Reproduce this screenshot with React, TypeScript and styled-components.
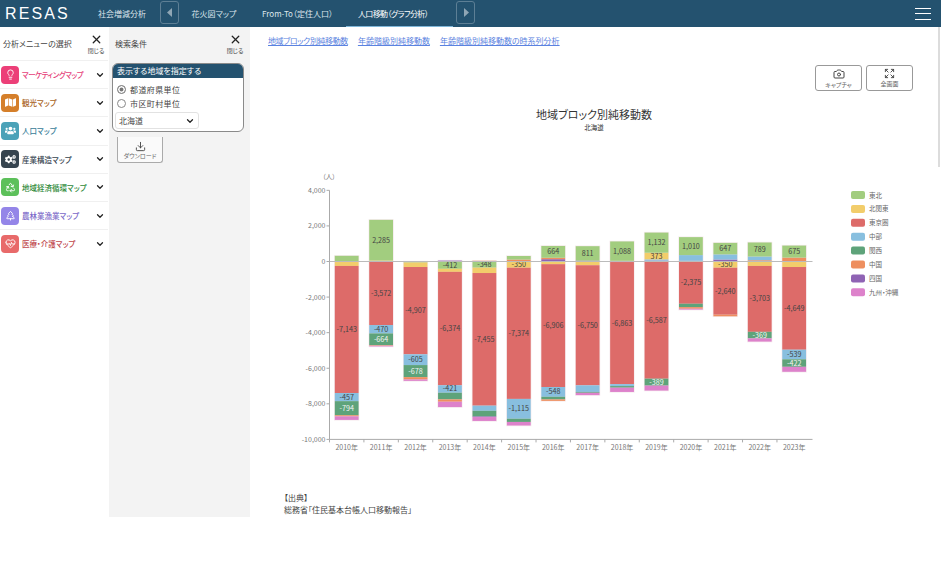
import React from "react";
import styled, { createGlobalStyle } from "styled-components";
import {
  ChevronDown,
  X,
  Lightbulb,
  Recycle,
  TreePine,
  HeartPulse,
  Camera,
  Expand,
  Download,
} from "lucide-react";
import { FaCogs, FaMap, FaUsers } from "react-icons/fa";

const GlobalStyle = createGlobalStyle`
  html, body {
    margin: 0;
    padding: 0;
    background: #fff;
    font-family: "Noto Sans CJK JP", "Noto Sans", sans-serif;
    font-feature-settings: "palt";
    color: #333;
  }
`;

const Page = styled.div`
  position: relative;
  width: 941px;
  height: 561px;
  overflow: hidden;
  display: flex;
  flex-direction: column;
`;

const ScrollThumb = styled.div`
  position: absolute;
  top: 27px;
  right: 1px;
  width: 2px;
  height: 140px;
  background: #dcdcdc;
`;

const Header = styled.header`
  height: 27px;
  flex: none;
  background: #24526f;
  display: flex;
  align-items: stretch;
  color: #fff;
`;

const Logo = styled.div`
  width: 84px;
  padding-left: 5px;
  box-sizing: border-box;
  font-family: "Liberation Sans", sans-serif;
  font-size: 16px;
  letter-spacing: 2.1px;
  line-height: 27px;
`;

const Tab = styled.div<{ $w: number; $active?: boolean }>`
  width: ${({ $w }) => $w}px;
  flex: none;
  text-align: center;
  font-size: 8px;
  line-height: 27px;
  box-sizing: border-box;
  color: ${({ $active }) => ($active ? "#fff" : "#dde6ec")};
  border-bottom: ${({ $active }) => ($active ? "1px solid #7fb6d8" : "none")};
  padding-right: ${({ $active }) => ($active ? "13px" : "0")};
  letter-spacing: ${({ $active }) => ($active ? "-0.6px" : "0")};
`;

const Arrow = styled.div<{ $gap?: number }>`
  width: 19px;
  height: 23px;
  margin: 1px 0 0 ${({ $gap }) => $gap ?? 0}px;
  flex: none;
  box-sizing: border-box;
  border: 1px solid #5d7f95;
  border-radius: 3px;
  display: flex;
  align-items: center;
  justify-content: center;
`;

const Hamburger = styled.div`
  margin-left: auto;
  margin-right: 10px;
  width: 16px;
  display: flex;
  flex-direction: column;
  justify-content: center;
  gap: 4.5px;

  span {
    height: 1px;
    background: #fff;
  }
`;

const Body = styled.div`
  display: flex;
  height: 490px;
  flex: none;
`;

const Side = styled.aside`
  width: 109px;
  flex: none;
  background: #fff;
`;

const PanelHead = styled.div`
  height: 33px;
  display: flex;
  justify-content: space-between;
  align-items: flex-start;
  font-size: 8px;
`;

const PanelTitle = styled.div`
  padding: 11px 0 0 3px;
  line-height: 12px;
  color: #444;
`;

const CloseBtn = styled.div<{ $right: number }>`
  width: 18px;
  margin-right: ${({ $right }) => $right}px;
  padding-top: 6px;
  display: flex;
  flex-direction: column;
  align-items: center;
  font-size: 6px;
  line-height: 9px;
  color: #444;
`;

const MenuItem = styled.div`
  height: 28.2px;
  box-sizing: border-box;
  margin-right: 1px;
  padding-right: 3px;
  border-top: 1px solid #f0f0f0;
  display: flex;
  align-items: center;
`;

const MenuIcon = styled.div<{ $c: string }>`
  width: 18px;
  height: 18px;
  margin-left: 1px;
  flex: none;
  border-radius: 4px;
  background: ${({ $c }) => $c};
  display: flex;
  align-items: center;
  justify-content: center;
  color: #fff;
`;

const MenuLabel = styled.div<{ $c: string; $track?: number }>`
  flex: 1;
  margin-left: 3px;
  font-size: 7.5px;
  font-weight: 500;
  white-space: nowrap;
  letter-spacing: ${({ $track }) => $track ?? 0}px;
  color: ${({ $c }) => $c};
`;

const Search = styled.section`
  width: 141px;
  flex: none;
  background: #f3f3f3;
`;

const SearchTitle = styled(PanelTitle)`
  padding-left: 6px;
`;

const Box = styled.div`
  margin: 3px 6px 0 3px;
  height: 69px;
  box-sizing: border-box;
  background: #fff;
  border: 1px solid #8a8a8a;
  border-radius: 6px;
  overflow: hidden;
`;

const BoxHead = styled.div`
  height: 15px;
  margin: -1px -1px 4px;
  padding-left: 5px;
  background: #24526f;
  color: #fff;
  font-size: 8px;
  line-height: 15px;
`;

const RadioRow = styled.div`
  height: 14px;
  padding-left: 4px;
  display: flex;
  align-items: center;
  gap: 4px;
  font-size: 8px;
  letter-spacing: 0.4px;
  color: #444;
`;

const RadioDot = styled.span<{ $on?: boolean }>`
  width: 9px;
  height: 9px;
  box-sizing: border-box;
  border: 1px solid #888;
  border-radius: 50%;
  background: ${({ $on }) => ($on ? "#777" : "#fff")};
  box-shadow: ${({ $on }) => ($on ? "inset 0 0 0 1.5px #fff" : "none")};
`;

const Select = styled.div`
  width: 84px;
  height: 17px;
  margin: 2px 0 0 2px;
  padding: 0 3px;
  box-sizing: border-box;
  border: 1px solid #e2e2e2;
  border-radius: 3px;
  display: flex;
  align-items: center;
  justify-content: space-between;
  font-size: 8px;
  color: #444;
`;

const DownloadBtn = styled.div`
  width: 46px;
  height: 26px;
  margin: 5px 0 0 8px;
  box-sizing: border-box;
  border: 1px solid #aaa;
  border-top: none;
  border-radius: 0 0 3px 3px;
  background: #fafafa;
  display: flex;
  flex-direction: column;
  align-items: center;
  justify-content: flex-end;
  padding-bottom: 2px;
  font-size: 6px;
  line-height: 8px;
  color: #666;
`;

const Main = styled.main`
  flex: 1;
  min-width: 0;
  background: #fff;
`;

const Links = styled.nav`
  height: 38px;
  padding: 8px 0 0 18px;
  box-sizing: border-box;
  display: flex;
  gap: 10px;
`;

const LinkText = styled.a<{ $tight?: boolean }>`
  font-size: 8px;
  line-height: 12px;
  color: #5a82e0;
  text-decoration: underline;
  letter-spacing: ${({ $tight }) => ($tight ? "-0.4px" : "0")};
`;

const Tools = styled.div`
  height: 27px;
  padding-right: 28px;
  display: flex;
  justify-content: flex-end;
  gap: 4px;
`;

const ToolBtn = styled.div`
  width: 47px;
  height: 26px;
  box-sizing: border-box;
  border: 1px solid #999;
  border-radius: 3px;
  display: flex;
  flex-direction: column;
  align-items: center;
  justify-content: center;
  font-size: 6px;
  line-height: 8px;
  color: #666;
  gap: 1px;
`;

const ChartWrap = styled.div`
  height: 400px;
`;

const Source = styled.div`
  padding-left: 34px;
  font-size: 8px;
  line-height: 12px;
  color: #444;
`;

type Seg = [number, number];

// series index: 0 東北 1 北関東 2 東京圏 3 中部 4 関西 5 中国 6 四国 7 九州・沖縄
const series = [
  { name: "東北", color: "#a2cd7f" },
  { name: "北関東", color: "#f2cd6b" },
  { name: "東京圏", color: "#dd6b69" },
  { name: "中部", color: "#88bfdf" },
  { name: "関西", color: "#5ea37a" },
  { name: "中国", color: "#ee8f5f" },
  { name: "四国", color: "#8f63b4" },
  { name: "九州・沖縄", color: "#dd82cb" },
];

const years: { y: number; pos: Seg[]; neg: Seg[]; labels: number[] }[] = [
  { y: 2010, pos: [[0, 320]], neg: [[1, -250], [2, -7143], [3, -457], [4, -794], [5, -60], [7, -200]], labels: [-7143, -457, -794] },
  { y: 2011, pos: [[1, 57], [0, 2285]], neg: [[2, -3572], [3, -470], [4, -664], [5, -30], [7, -40]], labels: [2285, -3572, -470, -664] },
  { y: 2012, pos: [], neg: [[0, -60], [1, -250], [2, -4907], [3, -605], [4, -678], [5, -130], [7, -80]], labels: [-4907, -605, -678] },
  { y: 2013, pos: [[6, 50]], neg: [[0, -412], [1, -170], [2, -6374], [3, -421], [4, -375], [5, -130], [7, -300]], labels: [-412, -6374, -421] },
  { y: 2014, pos: [[5, 40]], neg: [[0, -348], [1, -300], [2, -7455], [3, -290], [4, -320], [6, -30], [7, -220]], labels: [-348, -7455] },
  { y: 2015, pos: [[5, 110], [0, 200]], neg: [[1, -350], [2, -7374], [3, -1115], [4, -180], [7, -200]], labels: [-350, -7374, -1115] },
  { y: 2016, pos: [[6, 130], [5, 80], [0, 664]], neg: [[1, -150], [2, -6906], [3, -548], [4, -150], [5, -80]], labels: [664, -6906, -548] },
  { y: 2017, pos: [[6, 50], [0, 811]], neg: [[1, -210], [2, -6750], [3, -370], [4, -50], [7, -130]], labels: [811, -6750] },
  { y: 2018, pos: [[5, 40], [0, 1088]], neg: [[1, -30], [2, -6863], [3, -110], [4, -90], [7, -240]], labels: [1088, -6863] },
  { y: 2019, pos: [[6, 50], [3, 70], [1, 373], [0, 1132]], neg: [[2, -6587], [4, -389], [7, -280]], labels: [1132, 373, -6587, -389] },
  { y: 2020, pos: [[6, 40], [3, 320], [0, 1010]], neg: [[2, -2375], [4, -190], [5, -90], [7, -50]], labels: [1010, -2375] },
  { y: 2021, pos: [[6, 110], [3, 290], [0, 647]], neg: [[1, -350], [2, -2640], [5, -90]], labels: [647, -350, -2640] },
  { y: 2022, pos: [[5, 70], [3, 210], [0, 789]], neg: [[1, -250], [2, -3703], [4, -369], [7, -180]], labels: [789, -3703, -369] },
  { y: 2023, pos: [[5, 220], [0, 675]], neg: [[1, -310], [2, -4649], [3, -539], [4, -422], [7, -280]], labels: [675, -4649, -539, -422] },
];

// chart svg is placed with its origin at page (250, 92)
const OX = 250;
const OY = 92;
const yOf = (v: number) => 261.5 - OY - v * 0.01779;
const xOf = (i: number) => 346.7 - OX + i * 34.42;
const fmt = (n: number) => n.toLocaleString("en-US");

function Chart() {
  const ticks = [4000, 2000, 0, -2000, -4000, -6000, -8000, -10000];
  const axisX = 329.5 - OX;
  const right = 812.5 - OX;
  const bottom = yOf(-10000);
  return (
    <svg width="691" height="373" fontFamily='"Noto Sans CJK JP", sans-serif'>
      <text x={594 - OX} y={119 - OY} fontSize="11" fill="#333" textAnchor="middle">地域ブロック別純移動数</text>
      <text x={594 - OX} y={130 - OY} fontSize="6.5" fill="#333" textAnchor="middle">北海道</text>
      <text x={329 - OX} y={179 - OY} fontSize="6.5" fill="#777" textAnchor="middle">（人）</text>

      {years.map((d, i) => {
        const x = xOf(i) - 11.9;
        let up = 0;
        let down = 0;
        const rects: React.ReactElement[] = [];
        const texts: React.ReactElement[] = [];
        const draw = ([s, v]: Seg, from: number) => {
          const to = from + v;
          const y1 = yOf(Math.max(from, to));
          const h = Math.abs(v) * 0.01779;
          rects.push(<rect key={`${s}${v}`} x={x} y={y1} width={23.8} height={h} fill={series[s].color} />);
          if (d.labels.includes(v)) {
            texts.push(
              <text key={`t${s}${v}`} x={xOf(i)} y={y1 + h / 2 + 2.5} fontSize="7.2" textAnchor="middle" fill={s === 4 ? "#f4f4f4" : "#444"}>
                {fmt(v)}
              </text>
            );
          }
          return to;
        };
        d.pos.forEach((seg) => { up = draw(seg, up); });
        d.neg.forEach((seg) => { down = draw(seg, down); });
        return (
          <g key={d.y}>
            <rect x={x - 0.7} y={yOf(up) - 0.7} width={25.2} height={yOf(down) - yOf(up) + 1.4} fill="#f4e6ea" opacity="0.8" />
            {rects}
            {texts}
          </g>
        );
      })}

      <line x1={axisX} x2={axisX} y1={yOf(4000)} y2={bottom} stroke="#aaa" />
      <line x1={axisX} x2={right} y1={bottom} y2={bottom} stroke="#aaa" />
      <line x1={axisX} x2={right} y1={yOf(0)} y2={yOf(0)} stroke="#bbb" />
      {ticks.map((t) => (
        <g key={t}>
          <line x1={axisX - 3} x2={axisX} y1={yOf(t)} y2={yOf(t)} stroke="#aaa" />
          <text x={axisX - 4} y={yOf(t) + 2.5} fontSize="7" fill="#777" textAnchor="end">{fmt(t)}</text>
        </g>
      ))}
      {years.map((d, i) => (
        <g key={d.y}>
          <line x1={xOf(i) - 17.2} x2={xOf(i) - 17.2} y1={bottom} y2={bottom + 3} stroke="#aaa" />
          <text x={xOf(i)} y={bottom + 11} fontSize="7" fill="#777" textAnchor="middle">{d.y}年</text>
        </g>
      ))}
      {series.map((s, i) => (
        <g key={s.name}>
          <rect x={851 - OX} y={191 + i * 13.9 - OY} width={14} height={8} rx="2" fill={s.color} />
          <text x={869 - OX} y={197.5 + i * 13.9 - OY} fontSize="6.5" fill="#666">{s.name}</text>
        </g>
      ))}
    </svg>
  );
}

const menus = [
  { label: "マーケティングマップ", c: "#e63f7a", bg: "#ec3f78", track: -0.5, icon: <Lightbulb size={11} /> },
  { label: "観光マップ", c: "#a8621a", bg: "#d57f2a", icon: <FaMap size={11} /> },
  { label: "人口マップ", c: "#3a8099", bg: "#4ba2b8", icon: <FaUsers size={11} /> },
  { label: "産業構造マップ", c: "#36444f", bg: "#36444f", icon: <FaCogs size={11} /> },
  { label: "地域経済循環マップ", c: "#2f8a3a", bg: "#5cc05a", icon: <Recycle size={11} /> },
  { label: "農林業漁業マップ", c: "#7a68c8", bg: "#9485e8", icon: <TreePine size={11} /> },
  { label: "医療・介護マップ", c: "#c0474c", bg: "#e86a6a", icon: <HeartPulse size={11} /> },
];

export default function App() {
  return (
    <Page>
      <GlobalStyle />
      <Header>
        <Logo>RESAS</Logo>
        <Tab $w={76}>社会増減分析</Tab>
        <Arrow>
          <svg width="6" height="9"><path d="M5 0v9L0 4.5z" fill="#8fa6b5" /></svg>
        </Arrow>
        <Tab $w={70}>花火図マップ</Tab>
        <Tab $w={97}>From-To（定住人口）</Tab>
        <Tab $w={107} $active>人口移動（グラフ分析）</Tab>
        <Arrow $gap={3}>
          <svg width="6" height="9"><path d="M1 0v9L6 4.5z" fill="#8fa6b5" /></svg>
        </Arrow>
        <Hamburger><span /><span /><span /></Hamburger>
      </Header>
      <Body>
        <Side>
          <PanelHead>
            <PanelTitle>分析メニューの選択</PanelTitle>
            <CloseBtn $right={4}><X size={13} strokeWidth={2.4} color="#222" />閉じる</CloseBtn>
          </PanelHead>
          {menus.map(({ label, c, bg, icon, track }) => (
            <MenuItem key={label}>
              <MenuIcon $c={bg}>{icon}</MenuIcon>
              <MenuLabel $c={c} $track={track}>{label}</MenuLabel>
              <ChevronDown size={10} strokeWidth={3} color="#222" />
            </MenuItem>
          ))}
        </Side>
        <Search>
          <PanelHead>
            <SearchTitle>検索条件</SearchTitle>
            <CloseBtn $right={6}><X size={13} strokeWidth={2.4} color="#222" />閉じる</CloseBtn>
          </PanelHead>
          <Box>
            <BoxHead>表示する地域を指定する</BoxHead>
            <RadioRow><RadioDot $on />都道府県単位</RadioRow>
            <RadioRow><RadioDot />市区町村単位</RadioRow>
            <Select>北海道<ChevronDown size={10} strokeWidth={3} color="#222" /></Select>
          </Box>
          <DownloadBtn>
            <Download size={11} color="#444" />
            ダウンロード
          </DownloadBtn>
        </Search>
        <Main>
          <Links>
            <LinkText $tight>地域ブロック別純移動数</LinkText>
            <LinkText>年齢階級別純移動数</LinkText>
            <LinkText>年齢階級別純移動数の時系列分析</LinkText>
          </Links>
          <Tools>
            <ToolBtn><Camera size={12} color="#444" />キャプチャ</ToolBtn>
            <ToolBtn><Expand size={11} color="#444" />全画面</ToolBtn>
          </Tools>
          <ChartWrap><Chart /></ChartWrap>
          <Source>
            <div>【出典】</div>
            <div>総務省「住民基本台帳人口移動報告」</div>
          </Source>
        </Main>
      </Body>
      <ScrollThumb />
    </Page>
  );
}
